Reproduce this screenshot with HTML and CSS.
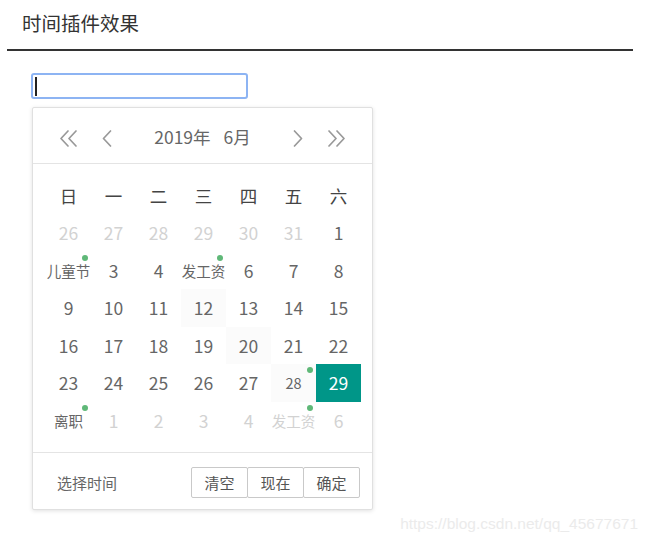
FILE: index.html
```html
<!DOCTYPE html>
<html lang="zh">
<head>
<meta charset="utf-8">
<title>时间插件效果</title>
<link rel="stylesheet" href="styles.css">
</head>
<body>
<div class="legend">
  <div class="legend-title">时间插件效果</div>
</div>
<div class="demo">
  <div class="fake-input"><span class="caret"></span></div>
  <div class="laydate">
    <div class="ld-header">
      <div class="ld-nav">
        <svg class="ico ico-double" viewBox="0 0 20 17"><polyline points="9,1 2,8.5 9,16"/><polyline points="17,1 10,8.5 17,16"/></svg>
        <svg class="ico ico-single" viewBox="0 0 10 17"><polyline points="8.5,1 1.5,8.5 8.5,16"/></svg>
      </div>
      <div class="ld-ym"><span>2019年</span><span>6月</span></div>
      <div class="ld-nav">
        <svg class="ico ico-single" viewBox="0 0 10 17"><polyline points="1.5,1 8.5,8.5 1.5,16"/></svg>
        <svg class="ico ico-double" viewBox="0 0 20 17"><polyline points="3,1 10,8.5 3,16"/><polyline points="11,1 18,8.5 11,16"/></svg>
      </div>
    </div>
    <div class="ld-content">
      <div class="ld-grid">
        <div class="th">日</div><div class="th">一</div><div class="th">二</div><div class="th">三</div><div class="th">四</div><div class="th">五</div><div class="th">六</div>

        <div class="td other">26</div><div class="td other">27</div><div class="td other">28</div><div class="td other">29</div><div class="td other">30</div><div class="td other">31</div><div class="td">1</div>

        <div class="td mark dot">儿童节</div><div class="td">3</div><div class="td">4</div><div class="td mark dot">发工资</div><div class="td">6</div><div class="td">7</div><div class="td">8</div>

        <div class="td">9</div><div class="td">10</div><div class="td">11</div><div class="td tint">12</div><div class="td">13</div><div class="td">14</div><div class="td">15</div>

        <div class="td">16</div><div class="td">17</div><div class="td">18</div><div class="td">19</div><div class="td tint">20</div><div class="td">21</div><div class="td">22</div>

        <div class="td">23</div><div class="td">24</div><div class="td">25</div><div class="td">26</div><div class="td">27</div><div class="td mark dot tint">28</div><div class="td selected">29</div>

        <div class="td mark dot">离职</div><div class="td other">1</div><div class="td other">2</div><div class="td other">3</div><div class="td other">4</div><div class="td other mark dot">发工资</div><div class="td other">6</div>
      </div>
    </div>
    <div class="ld-footer">
      <span class="ld-choose">选择时间</span>
      <div class="ld-btns">
        <span class="btn">清空</span><span class="btn">现在</span><span class="btn">确定</span>
      </div>
    </div>
  </div>
</div>
<div class="watermark">https://blog.csdn.net/qq_45677671</div>
</body>
</html>
```
FILE: styles.css
```css
* { box-sizing: border-box; }
html, body { margin: 0; padding: 0; background: #fff; }
body {
  position: relative;
  width: 645px;
  height: 543px;
  overflow: hidden;
  font-family: "Noto Sans CJK SC", "Noto Sans", sans-serif;
  color: #666;
}
.legend {
  margin: 0 12px 0 7px;
  padding: 9px 0 12px 15px;
  border-bottom: 2px solid #333;
}
.legend-title {
  font-size: 19.5px;
  line-height: 28px;
  color: #333;
}
.demo {
  padding: 22px 0 0 31px;
}
.fake-input {
  width: 217px;
  height: 26px;
  border: 2px solid #8db4f3;
  border-radius: 3px;
  display: flex;
  align-items: center;
  padding-left: 2px;
}
.caret {
  width: 2px;
  height: 19px;
  background: #222;
}
.laydate {
  margin: 8px 0 0 1px;
  width: 341px;
  height: 403px;
  border: 1px solid #e0e0e0;
  border-radius: 2px;
  box-shadow: 0 1px 4px rgba(0,0,0,0.12);
  background: #fff;
  display: flex;
  flex-direction: column;
}
.ld-header {
  height: 56px;
  border-bottom: 1px solid #e4e4e4;
  display: flex;
  align-items: center;
  justify-content: space-between;
  padding: 5px 26px 0 26px;
}
.ld-nav {
  display: flex;
  align-items: center;
  gap: 23px;
}
.ico {
  height: 17px;
  fill: none;
  stroke: #999;
  stroke-width: 1.7;
  stroke-linecap: round;
  stroke-linejoin: round;
}
.ico-double { width: 20px; }
.ico-single { width: 10px; }
.ld-ym {
  display: flex;
  gap: 13px;
  font-size: 17.5px;
  color: #666;
  margin-top: -3px;
}
.ld-content {
  padding: 12.5px 0 12.5px 13px;
}
.ld-grid {
  display: grid;
  grid-template-columns: repeat(7, 45px);
  grid-auto-rows: 37.5px;
}
.th, .td {
  display: flex;
  align-items: center;
  justify-content: center;
  font-size: 17.5px;
  white-space: nowrap;
  position: relative;
}
.th { color: #444; }
.td { color: #666; }
.td.other { color: #d2d2d2; }
.td.mark { font-size: 14.5px; }
.td.tint { background: #fbfbfb; }
.td.selected { background: #009688; color: #fff; }
.td.dot::after {
  content: "";
  position: absolute;
  top: 3px;
  right: 3px;
  width: 6px;
  height: 6px;
  border-radius: 50%;
  background: #5fb878;
}
.ld-footer {
  flex: 1;
  border-top: 1px solid #e4e4e4;
  display: flex;
  align-items: center;
  justify-content: space-between;
  padding: 3px 12px 0 24px;
}
.ld-choose {
  font-size: 15px;
  color: #666;
}
.ld-btns {
  display: flex;
}
.btn {
  height: 31px;
  line-height: 29px;
  padding: 0 12.5px;
  border: 1px solid #c9c9c9;
  margin-left: -1px;
  font-size: 15px;
  color: #555;
  background: #fff;
  border-radius: 2px;
}
.watermark {
  position: absolute;
  right: 7px;
  top: 514px;
  font-family: "Liberation Sans", Arial, sans-serif;
  font-size: 15.5px;
  line-height: 20px;
  color: #ebebeb;
}
```
